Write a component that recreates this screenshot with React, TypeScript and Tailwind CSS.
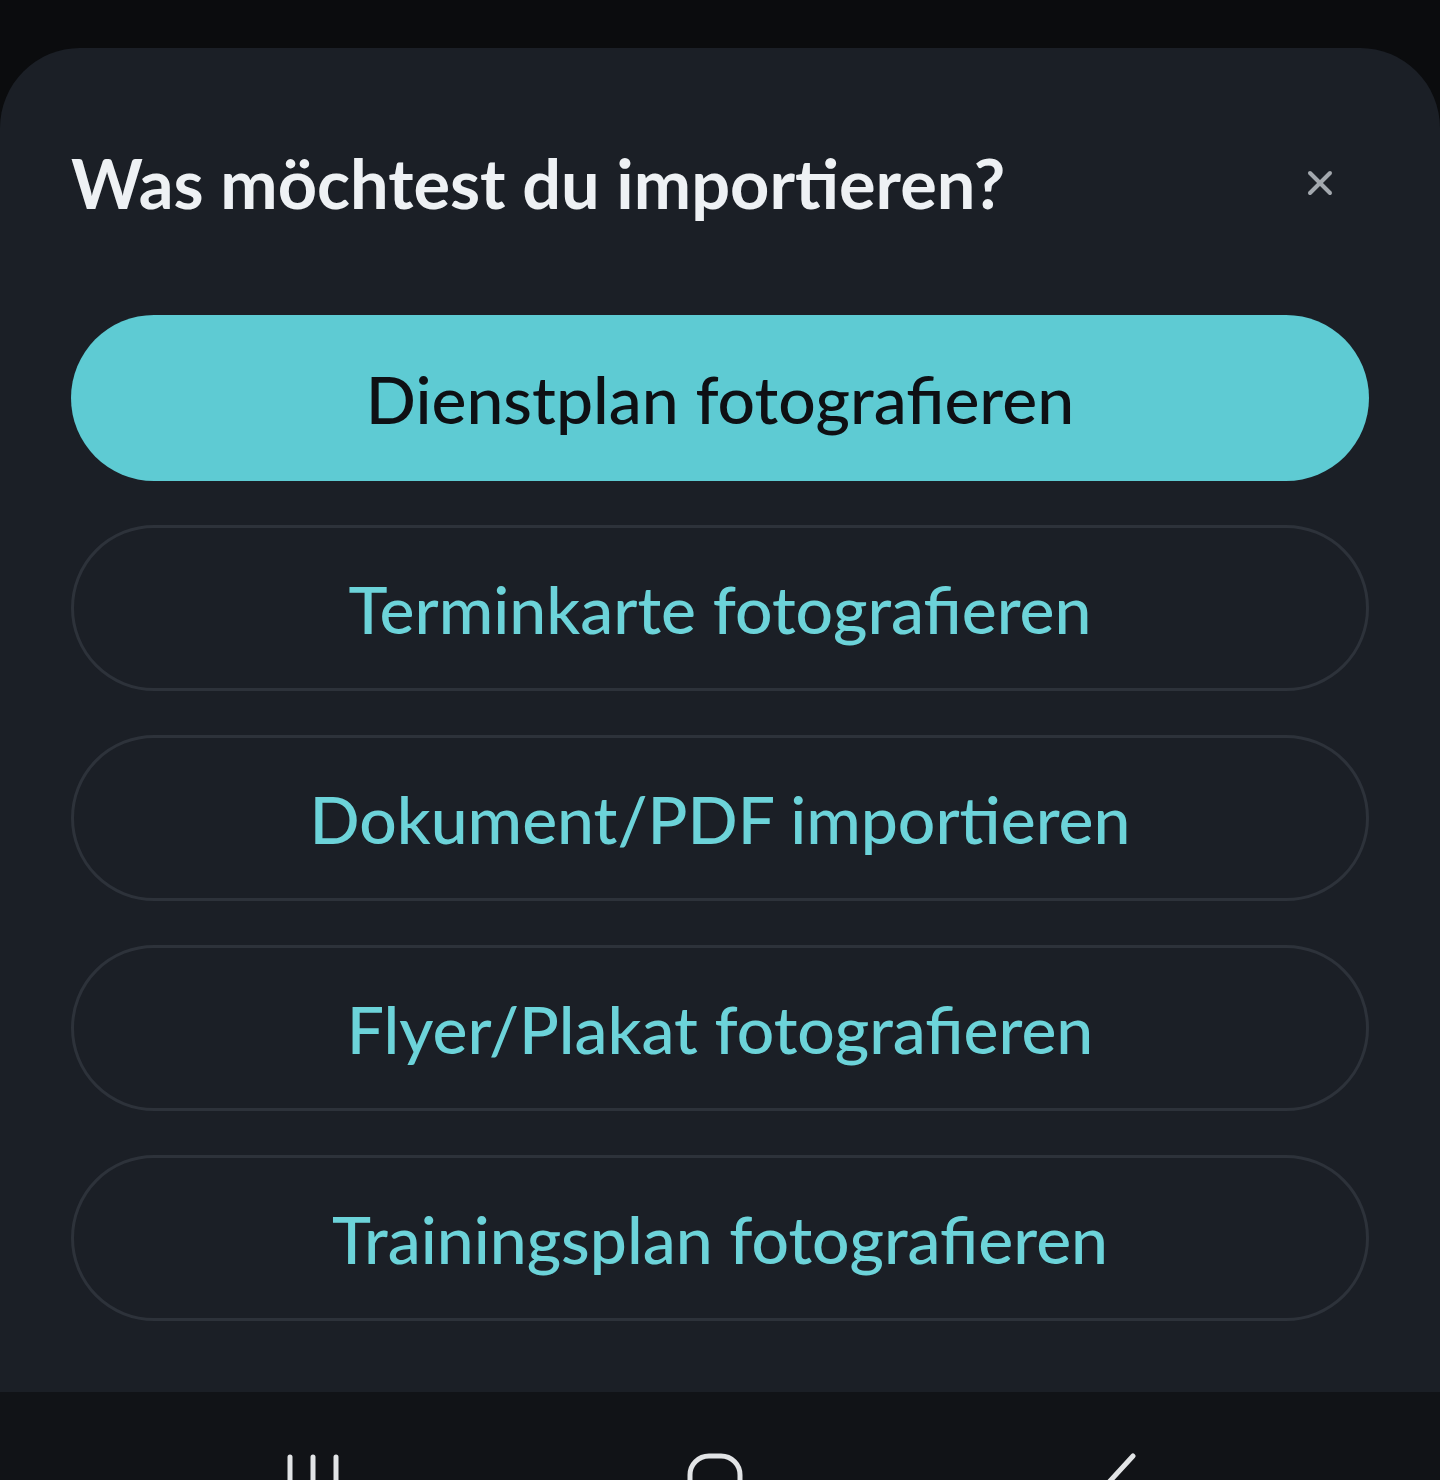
import { X } from "lucide-react";

const options = [
  "Dienstplan fotografieren",
  "Terminkarte fotografieren",
  "Dokument/PDF importieren",
  "Flyer/Plakat fotografieren",
  "Trainingsplan fotografieren",
];

const App = () => {
  return (
    <div
      className="w-[1440px] h-[1480px] bg-[#0b0c0e] flex flex-col overflow-hidden"
      style={{ fontFamily: "Lato, 'Noto Sans', sans-serif" }}
    >
      <div className="h-[48px] shrink-0" />
      <div className="flex-1 bg-[#1b1f26] rounded-t-[80px] px-[71px] pt-[92px] pb-[71px] flex flex-col">
        <div className="h-[86px] flex items-center justify-between">
          <h1 className="text-[68.5px] font-bold text-[#eef1f4] leading-none">
            Was möchtest du importieren?
          </h1>
          <button className="w-[60px] h-[60px] flex items-center justify-center mr-[19px] text-[#a3a8ae]">
            <X size={40} strokeWidth={2.4} />
          </button>
        </div>
        <div className="mt-[89px] flex flex-col gap-[44px]">
          {options.map((label, i) => (
            <button
              key={label}
              className={
                i === 0
                  ? "h-[166px] w-full rounded-full bg-[#5ecbd3] text-[#0e1014] text-[66px] font-medium flex items-center justify-center"
                  : "h-[166px] w-full rounded-full border-[3px] border-[#2d323a] text-[#6cd3d9] text-[66px] font-medium flex items-center justify-center"
              }
            >
              {label}
            </button>
          ))}
        </div>
      </div>
      <div className="h-[88px] shrink-0 bg-[#111317] flex items-start pl-[286px] pt-[61px]">
        <svg width="54" height="40" viewBox="0 0 54 40" className="text-[#e2e4e6]">
          <path d="M4 4v40M27 4v40M50 4v40" stroke="currentColor" strokeWidth="5" strokeLinecap="round" fill="none" />
        </svg>
        <svg width="60" height="40" viewBox="0 0 60 40" className="ml-[345px] text-[#e2e4e6]">
          <path d="M5 40V22a19 19 0 0 1 19-19h12a19 19 0 0 1 19 19v18" stroke="currentColor" strokeWidth="5" fill="none" />
        </svg>
        <svg width="44" height="40" viewBox="0 0 44 40" className="ml-[350px] text-[#e2e4e6]">
          <path d="M38 3L4 40" stroke="currentColor" strokeWidth="5" strokeLinecap="round" fill="none" />
        </svg>
      </div>
    </div>
  );
};

export default App;
